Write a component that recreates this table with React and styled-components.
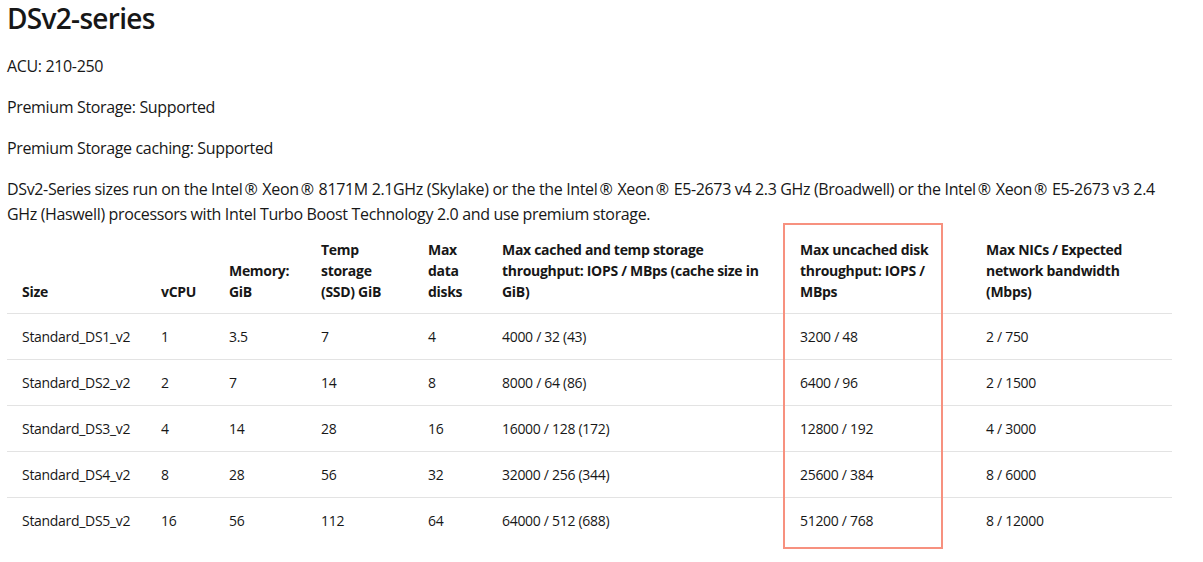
import React from "react";
import styled, { createGlobalStyle } from "styled-components";

const Global = createGlobalStyle`
  html, body { margin: 0; padding: 0; background: #ffffff; }
  body {
    font-family: "Open Sans", "Noto Sans", sans-serif;
    color: #171717;
    -webkit-font-smoothing: antialiased;
  }
`;

const Page = styled.main`
  padding: 0 0 12px 7px;
  width: 1165px;
`;

const Title = styled.h1`
  margin: 0 0 18px;
  font-size: 28px;
  line-height: 36px;
  font-weight: 600;
  letter-spacing: -0.7px;
`;

const Para = styled.p`
  margin: 0 0 16px;
  font-size: 16px;
  line-height: 25px;
  letter-spacing: -0.35px;
  &:last-of-type { margin-bottom: 0; }
`;

const Reg = styled.span`
  margin: 0 5px 0 2px;
`;

const TableWrap = styled.div`
  position: relative;
  padding-bottom: 10px;
`;

const Table = styled.table`
  width: 1165px;
  table-layout: fixed;
  border-collapse: collapse;
  font-size: 14px;
  line-height: 21px;
  letter-spacing: -0.3px;
`;

const Th = styled.th`
  text-align: left;
  vertical-align: bottom;
  font-weight: 700;
  padding: 12px 15px 11px;
  border-bottom: 1px solid #e3e3e3;
  white-space: nowrap;
`;

const Td = styled.td`
  padding: 12px 15px;
  vertical-align: middle;
  border-top: ${(p) => (p.$first ? "none" : "1px solid #e3e3e3")};
  white-space: nowrap;
`;

const Highlight = styled.div`
  position: absolute;
  left: 776px;
  top: -4px;
  width: 156px;
  height: 322px;
  border: 2px solid #f7917f;
  pointer-events: none;
`;

const widths = [139, 68, 92, 107, 74, 298, 186, 201];

const headers = [
  ["Size"],
  ["vCPU"],
  ["Memory:", "GiB"],
  ["Temp", "storage", "(SSD) GiB"],
  ["Max", "data", "disks"],
  ["Max cached and temp storage", "throughput: IOPS / MBps (cache size in", "GiB)"],
  ["Max uncached disk", "throughput: IOPS /", "MBps"],
  ["Max NICs / Expected", "network bandwidth", "(Mbps)"],
];

const rows = [
  ["Standard_DS1_v2", "1", "3.5", "7", "4", "4000 / 32 (43)", "3200 / 48", "2 / 750"],
  ["Standard_DS2_v2", "2", "7", "14", "8", "8000 / 64 (86)", "6400 / 96", "2 / 1500"],
  ["Standard_DS3_v2", "4", "14", "28", "16", "16000 / 128 (172)", "12800 / 192", "4 / 3000"],
  ["Standard_DS4_v2", "8", "28", "56", "32", "32000 / 256 (344)", "25600 / 384", "8 / 6000"],
  ["Standard_DS5_v2", "16", "56", "112", "64", "64000 / 512 (688)", "51200 / 768", "8 / 12000"],
];

export default function App() {
  return (
    <Page>
      <Global />
      <Title>DSv2-series</Title>
      <Para>ACU: 210-250</Para>
      <Para>Premium Storage: Supported</Para>
      <Para>Premium Storage caching: Supported</Para>
      <Para>
        DSv2-Series sizes run on the Intel<Reg>®</Reg>Xeon<Reg>®</Reg>8171M 2.1GHz (Skylake) or the the Intel<Reg>®</Reg>Xeon<Reg>®</Reg>E5-2673 v4 2.3 GHz (Broadwell) or the Intel<Reg>®</Reg>Xeon<Reg>®</Reg>E5-2673 v3 2.4
        <br />
        GHz (Haswell) processors with Intel Turbo Boost Technology 2.0 and use premium storage.
      </Para>
      <TableWrap>
        <Table>
          <colgroup>
            {widths.map((w, i) => (
              <col key={i} style={{ width: w }} />
            ))}
          </colgroup>
          <thead>
            <tr>
              {headers.map((h, i) => (
                <Th key={i}>
                  {h.map((line, j) => (
                    <React.Fragment key={j}>
                      {j > 0 && <br />}
                      {line}
                    </React.Fragment>
                  ))}
                </Th>
              ))}
            </tr>
          </thead>
          <tbody>
            {rows.map((r, i) => (
              <tr key={i}>
                {r.map((c, j) => (
                  <Td key={j} $first={i === 0}>
                    {c}
                  </Td>
                ))}
              </tr>
            ))}
          </tbody>
        </Table>
        <Highlight />
      </TableWrap>
    </Page>
  );
}
